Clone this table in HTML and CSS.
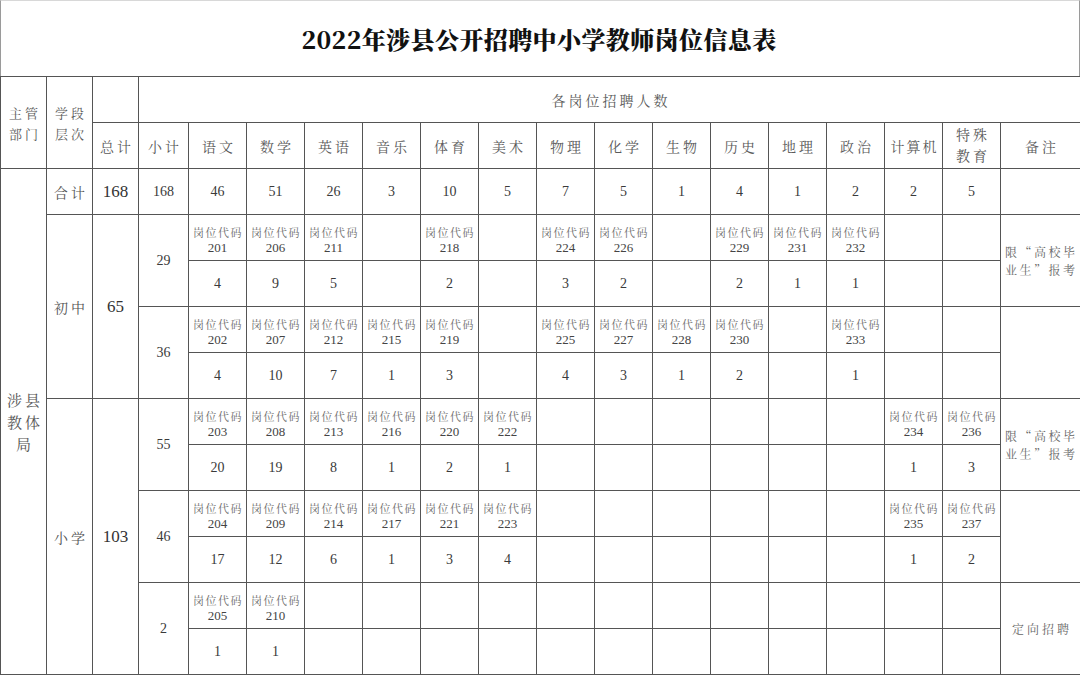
FILE: index.html
```html
<!DOCTYPE html>
<html lang="zh-CN">
<head>
<meta charset="utf-8">
<title>2022年涉县公开招聘中小学教师岗位信息表</title>
<link rel="stylesheet" href="styles.css">
</head>
<body>
<div class="sheet">
  <div class="title">2022年涉县公开招聘中小学教师岗位信息表</div>
  <table class="grid">
    <colgroup>
      <col class="w46"><col class="w46"><col class="w46"><col class="w50">
      <col class="w58"><col class="w58"><col class="w58"><col class="w58"><col class="w58"><col class="w58"><col class="w58">
      <col class="w58"><col class="w58"><col class="w58"><col class="w58"><col class="w58"><col class="w58"><col class="w58">
      <col class="w80">
    </colgroup>
    <thead>
      <tr>
        <th rowspan="2" class="hsm">主管部门</th>
        <th rowspan="2" class="hsm">学段层次</th>
        <th></th>
        <th colspan="16" class="hwide">各岗位招聘人数</th>
      </tr>
      <tr>
        <th>总计</th><th>小计</th><th>语文</th><th>数学</th><th>英语</th><th>音乐</th><th>体育</th><th>美术</th><th>物理</th><th>化学</th><th>生物</th><th>历史</th><th>地理</th><th>政治</th><th class="tight">计算机</th><th class="two">特殊教育</th><th>备注</th>
      </tr>
    </thead>
    <tbody>
      <tr>
        <td rowspan="11" class="dept">涉县教体局</td>
        <td class="cn">合计</td><td class="big">168</td><td>168</td>
        <td>46</td><td>51</td><td>26</td><td>3</td><td>10</td><td>5</td><td>7</td><td>5</td><td>1</td><td>4</td><td>1</td><td>2</td><td>2</td><td>5</td><td></td>
      </tr>
      <tr>
        <td rowspan="4" class="cn">初中</td><td rowspan="4" class="big">65</td><td rowspan="2">29</td>
        <td class="code"><span class="lbl">岗位代码</span><span class="no">201</span></td>
        <td class="code"><span class="lbl">岗位代码</span><span class="no">206</span></td>
        <td class="code"><span class="lbl">岗位代码</span><span class="no">211</span></td>
        <td></td>
        <td class="code"><span class="lbl">岗位代码</span><span class="no">218</span></td>
        <td></td>
        <td class="code"><span class="lbl">岗位代码</span><span class="no">224</span></td>
        <td class="code"><span class="lbl">岗位代码</span><span class="no">226</span></td>
        <td></td>
        <td class="code"><span class="lbl">岗位代码</span><span class="no">229</span></td>
        <td class="code"><span class="lbl">岗位代码</span><span class="no">231</span></td>
        <td class="code"><span class="lbl">岗位代码</span><span class="no">232</span></td>
        <td></td><td></td>
        <td rowspan="2" class="note">限“高校毕业生”报考</td>
      </tr>
      <tr>
        <td>4</td><td>9</td><td>5</td><td></td><td>2</td><td></td><td>3</td><td>2</td><td></td><td>2</td><td>1</td><td>1</td><td></td><td></td>
      </tr>
      <tr>
        <td rowspan="2">36</td>
        <td class="code"><span class="lbl">岗位代码</span><span class="no">202</span></td>
        <td class="code"><span class="lbl">岗位代码</span><span class="no">207</span></td>
        <td class="code"><span class="lbl">岗位代码</span><span class="no">212</span></td>
        <td class="code"><span class="lbl">岗位代码</span><span class="no">215</span></td>
        <td class="code"><span class="lbl">岗位代码</span><span class="no">219</span></td>
        <td></td>
        <td class="code"><span class="lbl">岗位代码</span><span class="no">225</span></td>
        <td class="code"><span class="lbl">岗位代码</span><span class="no">227</span></td>
        <td class="code"><span class="lbl">岗位代码</span><span class="no">228</span></td>
        <td class="code"><span class="lbl">岗位代码</span><span class="no">230</span></td>
        <td></td>
        <td class="code"><span class="lbl">岗位代码</span><span class="no">233</span></td>
        <td></td><td></td>
        <td rowspan="2"></td>
      </tr>
      <tr>
        <td>4</td><td>10</td><td>7</td><td>1</td><td>3</td><td></td><td>4</td><td>3</td><td>1</td><td>2</td><td></td><td>1</td><td></td><td></td>
      </tr>
      <tr>
        <td rowspan="6" class="cn">小学</td><td rowspan="6" class="big">103</td><td rowspan="2">55</td>
        <td class="code"><span class="lbl">岗位代码</span><span class="no">203</span></td>
        <td class="code"><span class="lbl">岗位代码</span><span class="no">208</span></td>
        <td class="code"><span class="lbl">岗位代码</span><span class="no">213</span></td>
        <td class="code"><span class="lbl">岗位代码</span><span class="no">216</span></td>
        <td class="code"><span class="lbl">岗位代码</span><span class="no">220</span></td>
        <td class="code"><span class="lbl">岗位代码</span><span class="no">222</span></td>
        <td></td><td></td><td></td><td></td><td></td><td></td>
        <td class="code"><span class="lbl">岗位代码</span><span class="no">234</span></td>
        <td class="code"><span class="lbl">岗位代码</span><span class="no">236</span></td>
        <td rowspan="2" class="note">限“高校毕业生”报考</td>
      </tr>
      <tr>
        <td>20</td><td>19</td><td>8</td><td>1</td><td>2</td><td>1</td><td></td><td></td><td></td><td></td><td></td><td></td><td>1</td><td>3</td>
      </tr>
      <tr>
        <td rowspan="2">46</td>
        <td class="code"><span class="lbl">岗位代码</span><span class="no">204</span></td>
        <td class="code"><span class="lbl">岗位代码</span><span class="no">209</span></td>
        <td class="code"><span class="lbl">岗位代码</span><span class="no">214</span></td>
        <td class="code"><span class="lbl">岗位代码</span><span class="no">217</span></td>
        <td class="code"><span class="lbl">岗位代码</span><span class="no">221</span></td>
        <td class="code"><span class="lbl">岗位代码</span><span class="no">223</span></td>
        <td></td><td></td><td></td><td></td><td></td><td></td>
        <td class="code"><span class="lbl">岗位代码</span><span class="no">235</span></td>
        <td class="code"><span class="lbl">岗位代码</span><span class="no">237</span></td>
        <td rowspan="2"></td>
      </tr>
      <tr>
        <td>17</td><td>12</td><td>6</td><td>1</td><td>3</td><td>4</td><td></td><td></td><td></td><td></td><td></td><td></td><td>1</td><td>2</td>
      </tr>
      <tr>
        <td rowspan="2">2</td>
        <td class="code"><span class="lbl">岗位代码</span><span class="no">205</span></td>
        <td class="code"><span class="lbl">岗位代码</span><span class="no">210</span></td>
        <td></td><td></td><td></td><td></td><td></td><td></td><td></td><td></td><td></td><td></td><td></td><td></td>
        <td rowspan="2" class="note center">定向招聘</td>
      </tr>
      <tr>
        <td>1</td><td>1</td><td></td><td></td><td></td><td></td><td></td><td></td><td></td><td></td><td></td><td></td><td></td><td></td>
      </tr>
    </tbody>
  </table>
</div>
</body>
</html>
```
FILE: styles.css
```css
html, body {
  margin: 0;
  padding: 0;
  background: #ffffff;
}

.sheet {
  width: 1080px;
  height: 675px;
  overflow: hidden;
  background: #ffffff;
}

.title {
  box-sizing: border-box;
  height: 76px;
  border-top: 1px solid #d8d8d8;
  border-left: 1px solid #9a9a9a;
  border-right: 1px solid #9a9a9a;
  display: flex;
  align-items: center;
  justify-content: center;
  padding-right: 2px;
  font-family: "Noto Serif CJK SC", "Liberation Serif", "Noto Sans CJK SC", serif;
  font-weight: 900;
  font-size: 24px;
  color: #111111;
  letter-spacing: 0.4px;
}

.grid {
  width: 1080px;
  table-layout: fixed;
  border-collapse: collapse;
  font-family: "Liberation Serif", "Noto Serif CJK SC", "Noto Sans CJK SC", serif;
  color: #3a3a3a;
}

.w46 { width: 46px; }
.w50 { width: 50px; }
.w58 { width: 58px; }
.w80 { width: 80px; }

.grid tr {
  height: 46px;
}

.grid th,
.grid td {
  border: 1px solid #555555;
  padding: 0;
  text-align: center;
  vertical-align: middle;
  font-size: 14px;
  font-weight: 400;
  line-height: 16px;
}

.grid th {
  font-family: "Noto Serif CJK SC", "Noto Sans CJK SC", sans-serif;
  color: #5a5a5a;
  font-size: 14px;
  letter-spacing: 3px;
  padding-left: 3px;
}

.grid th.hsm {
  font-size: 13px;
  line-height: 21px;
  letter-spacing: 3px;
  padding: 0 4px 0 7px;
}

.grid th.hwide {
  letter-spacing: 3px;
}

.grid th.tight {
  letter-spacing: 2px;
  padding-left: 2px;
}

.grid th.two {
  line-height: 21px;
  padding: 0 10px 2px 13px;
}

.grid td.dept {
  font-family: "Noto Serif CJK SC", "Noto Sans CJK SC", sans-serif;
  color: #555555;
  font-size: 15px;
  line-height: 22px;
  letter-spacing: 3px;
  padding: 0 2px 0 5px;
}

.grid td.cn {
  font-family: "Noto Serif CJK SC", "Noto Sans CJK SC", sans-serif;
  color: #555555;
  letter-spacing: 3px;
  padding-left: 3px;
}

.grid td.big {
  font-size: 17px;
  color: #333333;
}

.grid td.code {
  padding-top: 4px;
}

.lbl {
  display: block;
  font-family: "Noto Serif CJK SC", "Noto Sans CJK SC", sans-serif;
  font-size: 11px;
  line-height: 16px;
  letter-spacing: 1.5px;
  padding-left: 1px;
  color: #6a6a6a;
  white-space: nowrap;
}

.no {
  display: block;
  font-size: 13px;
  line-height: 16px;
  color: #444444;
}

.grid td.note {
  font-family: "Noto Serif CJK SC", "Noto Sans CJK SC", sans-serif;
  text-align: left;
  color: #666666;
  font-size: 12px;
  line-height: 18px;
  letter-spacing: 2.5px;
  padding: 0 0 0 4px;
}

.grid td.note.center {
  text-align: center;
  letter-spacing: 3px;
  padding-left: 3px;
}
```
